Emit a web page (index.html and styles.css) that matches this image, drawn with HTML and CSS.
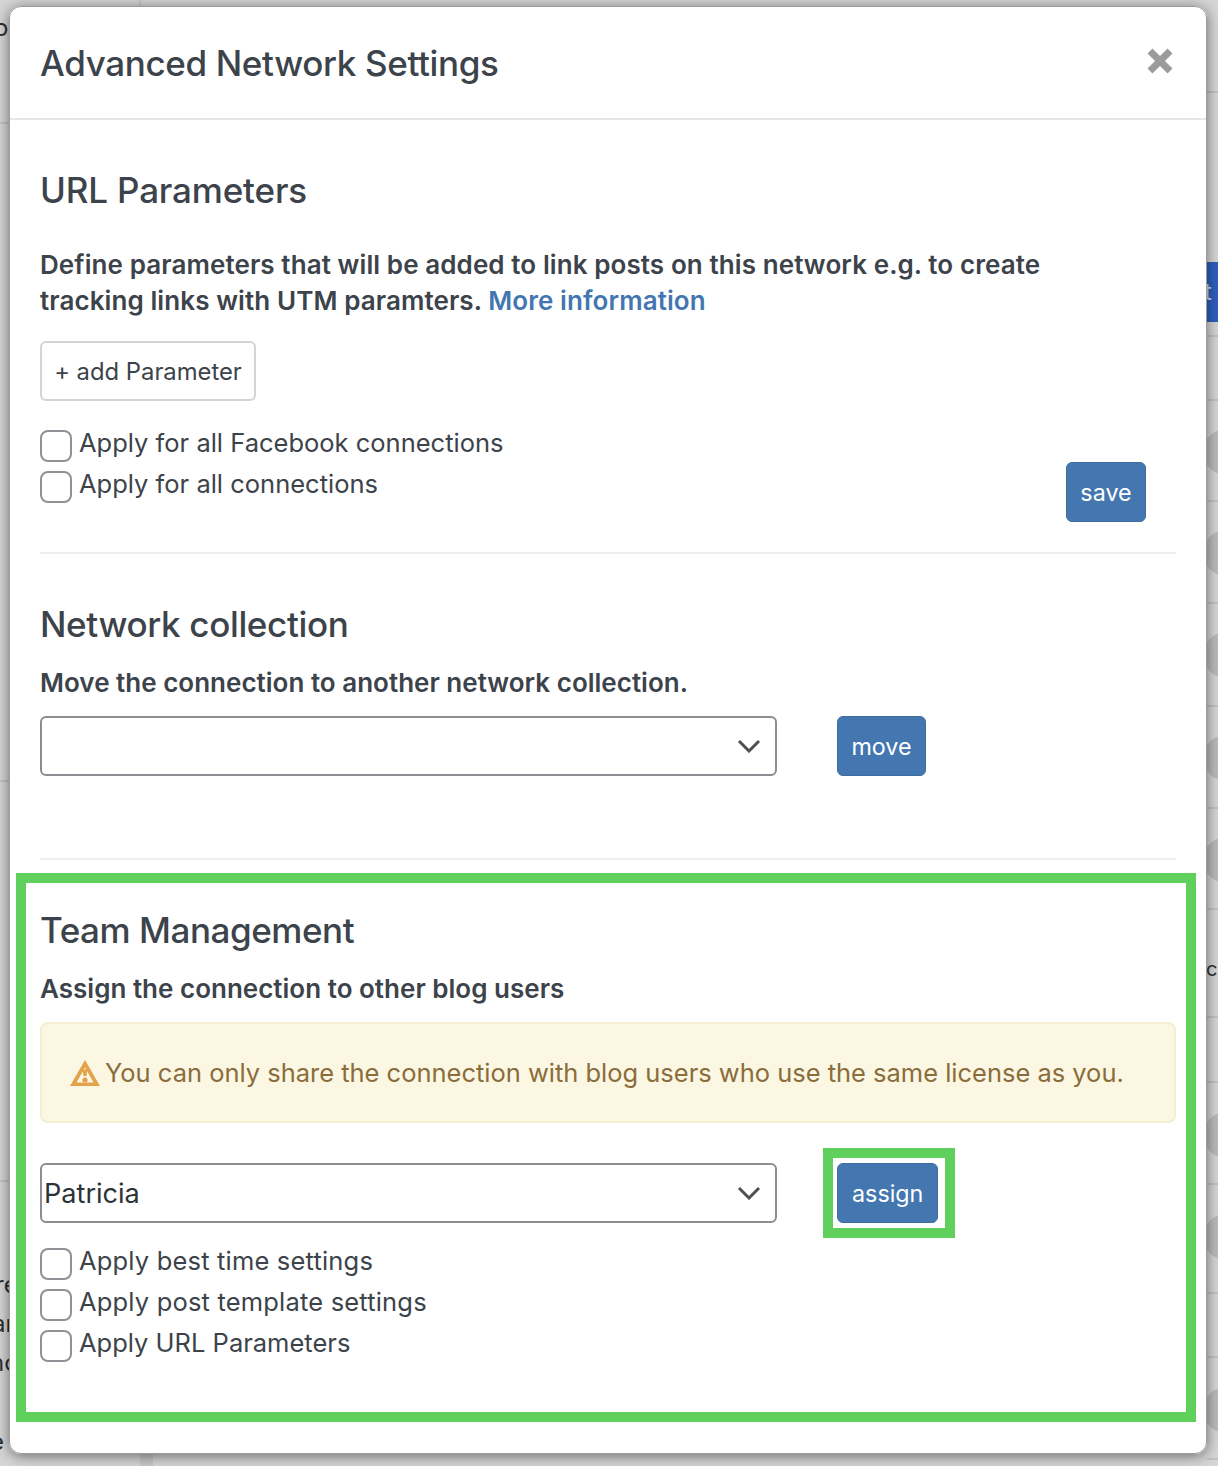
FILE: index.html
```html
<!DOCTYPE html>
<html lang="en">
<head>
<meta charset="utf-8">
<title>Advanced Network Settings</title>
<link rel="stylesheet" href="styles.css">
</head>
<body>
<div class="backdrop">
  <i class="vline v1"></i><i class="vline v2"></i>
  <i class="rule r-l" style="top:122px"></i><i class="rule r-l" style="top:780px"></i><i class="rule r-l" style="top:1180px"></i>
  <i class="rule r-r" style="top:91px"></i><i class="rule r-r" style="top:335px"></i><i class="rule r-r" style="top:399px"></i><i class="rule r-r" style="top:500px"></i><i class="rule r-r" style="top:602px"></i><i class="rule r-r" style="top:705px"></i><i class="rule r-r" style="top:807px"></i><i class="rule r-r" style="top:908px"></i><i class="rule r-r" style="top:1016px"></i><i class="rule r-r" style="top:1081px"></i><i class="rule r-r" style="top:1183px"></i><i class="rule r-r" style="top:1292px"></i><i class="rule r-r" style="top:1356px"></i><i class="rule r-r" style="top:1458px"></i>
  <i class="dot" style="top:429px"></i><i class="dot" style="top:530px"></i><i class="dot" style="top:632px"></i><i class="dot" style="top:735px"></i><i class="dot" style="top:837px"></i><i class="dot" style="top:1112px"></i><i class="dot" style="top:1214px"></i><i class="dot" style="top:1387px"></i>
  <div class="bluebar"><span>t I</span></div>
  <span class="peek p1">o</span><span class="peek p2">c</span><span class="peek p3">re</span><span class="peek p4">ar</span><span class="peek p5">nc</span><span class="peek p6">e</span>
</div>

<main class="modal">
  <header class="modal-head">
    <h1>Advanced Network Settings</h1>
    <svg class="close" viewBox="0 0 26 26" aria-label="Close"><path d="M3 3 L23 23 M23 3 L3 23"/></svg>
  </header>
  <div class="modal-body">
    <section class="sec sec-url">
      <h2>URL Parameters</h2>
      <p class="lead">Define parameters that will be added to link posts on this network e.g. to create tracking links with UTM paramters. <a href="#">More information</a></p>
      <button class="btn-outline">+ add Parameter</button>
      <div class="apply-row">
        <div class="checks">
          <label class="check"><span class="box"></span>Apply for all Facebook connections</label>
          <label class="check"><span class="box"></span>Apply for all connections</label>
        </div>
        <button class="btn btn-save">save</button>
      </div>
    </section>
    <section class="sec sec-coll">
      <h2>Network collection</h2>
      <p class="lead">Move the connection to another network collection.</p>
      <div class="select-row">
        <div class="select"><span></span><svg class="chev" viewBox="0 0 24 14"><path d="M2 2 L12 12 L22 2"/></svg></div>
        <button class="btn btn-move">move</button>
      </div>
    </section>
    <section class="sec sec-team">
      <h2>Team Management</h2>
      <p class="lead">Assign the connection to other blog users</p>
      <div class="alert">
        <svg class="warn" viewBox="0 0 30 26"><path fill-rule="evenodd" d="M15 0 L30 26 H0 Z M15 7.5 L6.5 22.5 H23.5 Z"/><path d="M12.6 9.5 H17.4 L16.6 16 H13.4 Z"/><circle cx="15" cy="20" r="2.6"/></svg>
        <span>You can only share the connection with blog users who use the same license as you.</span>
      </div>
      <div class="select-row">
        <div class="select"><span>Patricia</span><svg class="chev" viewBox="0 0 24 14"><path d="M2 2 L12 12 L22 2"/></svg></div>
        <div class="assign-wrap">
          <button class="btn">assign</button>
          <i class="mark mark-btn"></i>
        </div>
      </div>
      <div class="checks team-checks">
        <label class="check check-wide"><span class="box"></span>Apply best time settings</label>
        <label class="check check-wide"><span class="box"></span>Apply post template settings</label>
        <label class="check"><span class="box"></span>Apply URL Parameters</label>
      </div>
      <i class="mark mark-sec"></i>
    </section>
  </div>
</main>
</body>
</html>
```
FILE: styles.css
```css
* { box-sizing: border-box; }
html, body { margin: 0; height: 100%; }
body {
  width: 1218px;
  height: 1466px;
  overflow: hidden;
  position: relative;
  background: #d6d6d6;
  font-family: Inter, "Liberation Sans", sans-serif;
  color: #3c434a;
  padding: 6px 11px 12px 9px;
}
.backdrop { position: absolute; inset: 0; overflow: hidden; }
.vline { position: absolute; top: 0; bottom: 0; width: 13px; background: #c8c8c8; }
.v1 { left: 139px; width: 2px; top: 0; bottom: auto; height: 7px; }
.v2 { left: 140px; top: 1454px; }
.rule { position: absolute; height: 2px; background: #c2c2c2; }
.r-l { left: 0; width: 10px; }
.r-r { left: 1207px; right: 0; }
.dot { position: absolute; left: 1203px; width: 46px; height: 46px; border-radius: 50%; background: #bcbcbc; }
.bluebar { position: absolute; left: 1207px; right: 0; top: 262px; height: 60px; background: #2d5fbd; color: #cfd9ee; font-size: 24px; line-height: 60px; white-space: nowrap; overflow: hidden; }
.bluebar span { margin-left: -3px; }
.peek { position: absolute; font-size: 24px; line-height: 28px; color: #2b2f33; }
.p1 { left: -6px; top: 14px; }
.p2 { left: 1206px; top: 955px; font-size: 20px; }
.p3 { left: -5px; top: 1271px; }
.p4 { left: -8px; top: 1310px; }
.p5 { left: -10px; top: 1349px; }
.p6 { left: -10px; top: 1428px; }

.modal {
  position: relative;
  height: 1448px;
  background: #fff;
  border-radius: 12px;
  outline: 1px solid #9c9c9c;
  outline-offset: -1px;
  box-shadow: 0 2px 14px rgba(0, 0, 0, .5);
}
.modal-head {
  height: 114px;
  border-bottom: 2px solid #e6e6e6;
  padding: 0 31px;
  display: flex;
  justify-content: space-between;
  align-items: flex-start;
}
h1 { margin: 36px 0 0; font-size: 35px; line-height: 42px; font-weight: 500; letter-spacing: -.36px; }
.close { width: 26px; height: 26px; margin: 42px 3px 0 0; }
.close path { stroke: #9b9b9b; stroke-width: 7; fill: none; }
.modal-body { padding: 0 31px; }
.sec { position: relative; border-bottom: 2px solid #eeeeee; }
.sec-url { height: 434px; padding-top: 49px; }
.sec-coll { height: 306px; padding-top: 49px; }
.sec-team { height: 500px; padding-top: 49px; border-bottom: 0; }
h2 { margin: 0; font-size: 35px; line-height: 42px; font-weight: 500; letter-spacing: -.35px; }
.sec-url h2 { letter-spacing: -.17px; }
.sec-team h2 { letter-spacing: -.45px; }
.lead { margin: 0; font-size: 26px; line-height: 36px; font-weight: 600; max-width: 1040px; }
.sec-url .lead { margin-top: 36px; letter-spacing: .09px; }
.sec-coll .lead, .sec-team .lead { margin-top: 20px; letter-spacing: .01px; }
a { color: #4376b0; text-decoration: none; }
.btn-outline {
  display: block;
  width: 216px; height: 60px;
  margin-top: 22px;
  background: #fff;
  border: 2px solid #d4d4d4;
  border-radius: 6px;
  font: 400 23.8px Inter, sans-serif;
  color: #3c434a;
  padding: 0;
}
.apply-row { display: flex; justify-content: space-between; align-items: flex-start; margin-top: 29px; padding-right: 30px; }
.checks { display: flex; flex-direction: column; gap: 9px; }
.check { display: flex; align-items: flex-start; gap: 7px; height: 32px; font-size: 25.5px; line-height: 26px; }
.check-wide { letter-spacing: .18px; }
.box { width: 32px; height: 32px; border: 2px solid #8f9196; border-radius: 8px; background: #fff; flex: none; }
.btn {
  display: block;
  height: 60px;
  padding: 0 14px;
  background: #4476b0;
  border: 1px solid #3d6ca3;
  border-radius: 6px;
  color: #fff;
  font: 400 23.3px Inter, sans-serif;
}
.btn-save { margin-top: 32px; width: 80px; padding: 0; }
.btn-move { width: 89px; padding: 0; }
.select-row { display: flex; align-items: center; gap: 60px; margin-top: 15px; }
.select {
  width: 737px; height: 60px;
  border: 2px solid #8c8c92;
  border-radius: 6px;
  display: flex; align-items: center; justify-content: space-between;
  padding: 0 14px 0 2px;
  font-size: 27.1px;
  color: #2c3338;
}
.chev { width: 24px; height: 14px; }
.chev path { fill: none; stroke: #505050; stroke-width: 3; }
.alert {
  margin-top: 15px;
  height: 101px;
  background: #fbf7e3;
  border: 2px solid #f7edd0;
  border-radius: 8px;
  display: flex; align-items: center; gap: 5px;
  padding-left: 28px;
  font-size: 25.48px;
  color: #8a6d3b;
}
.warn { width: 30px; height: 26px; flex: none; fill: #e2a34c; }
.sec-team .select-row { margin-top: 40px; gap: 60px; }
.assign-wrap { position: relative; }
.team-checks { margin-top: 25px; }
.mark { position: absolute; border: 10px solid #5fd05b; pointer-events: none; }
.mark-sec { left: -24px; right: -20px; top: 13px; height: 549px; }
.mark-btn { left: -14px; top: -15px; width: 132px; height: 90px; }
```
